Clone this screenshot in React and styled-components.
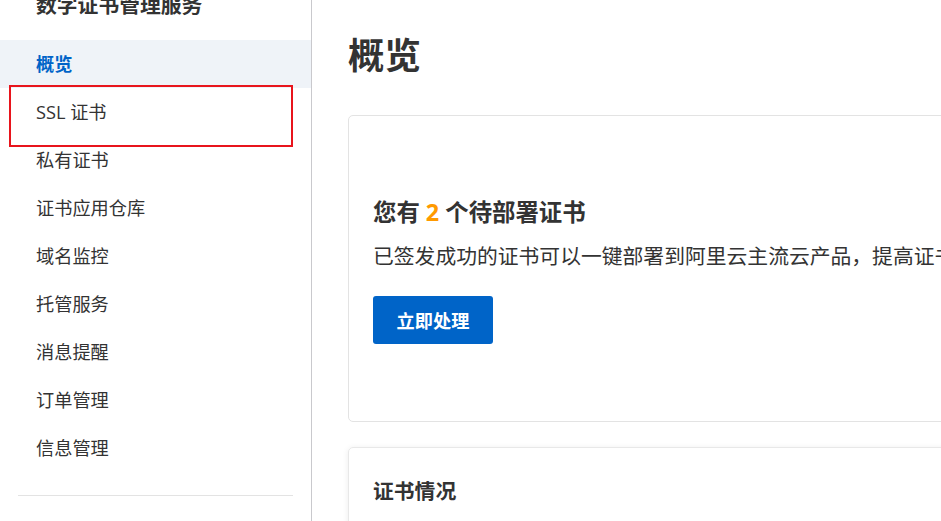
import React from "react";
import styled, { createGlobalStyle } from "styled-components";

const GlobalStyle = createGlobalStyle`
  html, body {
    margin: 0;
    padding: 0;
    background: #fff;
  }
  body {
    font-family: "Open Sans", "Noto Sans CJK SC", sans-serif;
    color: #333;
  }
`;

const menuItems = [
  "概览",
  "SSL 证书",
  "私有证书",
  "证书应用仓库",
  "域名监控",
  "托管服务",
  "消息提醒",
  "订单管理",
  "信息管理",
];

const App = () => {
  return (
    <Page>
      <GlobalStyle />
      <Sidebar>
        <SideTitle>数字证书管理服务</SideTitle>
        <Menu>
          {menuItems.map((item, i) => (
            <MenuItem key={item} active={i === 0}>
              {item}
              {i === 1 && <Highlight />}
            </MenuItem>
          ))}
        </Menu>
        <Divider />
      </Sidebar>
      <Main>
        <PageTitle>概览</PageTitle>
        <Card>
          <CardHeading>
            您有 <Count>2</Count> 个待部署证书
          </CardHeading>
          <CardText>
            已签发成功的证书可以一键部署到阿里云主流云产品，提高证书部署效率。
          </CardText>
          <PrimaryButton>立即处理</PrimaryButton>
        </Card>
        <StatusCard>
          <SectionTitle>证书情况</SectionTitle>
        </StatusCard>
      </Main>
    </Page>
  );
};

export default App;

const Page = styled.div`
  display: flex;
  width: 941px;
  height: 521px;
  overflow: hidden;
`;

const Sidebar = styled.aside`
  flex: none;
  width: 311px;
  border-right: 1px solid #c9c9cd;
  display: flex;
  flex-direction: column;
`;

const SideTitle = styled.div`
  margin-top: -10px;
  height: 30px;
  line-height: 30px;
  margin-bottom: 20px;
  padding-left: 36px;
  font-size: 20.8px;
  font-weight: 700;
  color: #333;
`;

const Menu = styled.nav`
  display: flex;
  flex-direction: column;
`;

const MenuItem = styled.div`
  position: relative;
  height: 48px;
  line-height: 48px;
  padding-left: 36px;
  font-size: 18.2px;
  font-weight: ${(p) => (p.active ? 700 : 400)};
  color: ${(p) => (p.active ? "#0064c8" : "#333")};
  background: ${(p) => (p.active ? "#eff3f8" : "transparent")};
`;

const Highlight = styled.span`
  position: absolute;
  left: 9px;
  top: -3px;
  width: 284px;
  height: 62px;
  box-sizing: border-box;
  border: 2px solid #e8141c;
`;

const Divider = styled.div`
  margin: 23px 0 0 18px;
  width: 275px;
  height: 1px;
  background: #e3e3e3;
`;

const Main = styled.main`
  flex: none;
  width: 1000px;
  padding: 30px 0 0 36px;
  display: flex;
  flex-direction: column;
`;

const PageTitle = styled.h1`
  margin: 0 0 35px;
  height: 50px;
  line-height: 50px;
  font-size: 36.4px;
  font-weight: 700;
  color: #333;
`;

const Card = styled.section`
  border: 1px solid #e3e3e3;
  border-radius: 5px;
  padding: 80px 24px 77px;
  display: flex;
  flex-direction: column;
  align-items: flex-start;
  white-space: nowrap;
`;

const CardHeading = styled.div`
  font-size: 23.4px;
  font-weight: 700;
  line-height: 32px;
  color: #333;
`;

const Count = styled.span`
  color: #ff9a00;
`;

const CardText = styled.div`
  margin-top: 12px;
  font-size: 20.8px;
  line-height: 32px;
  color: #333;
`;

const PrimaryButton = styled.button`
  margin-top: 24px;
  width: 120px;
  height: 48px;
  border: none;
  border-radius: 3px;
  background: #0064c8;
  color: #fff;
  font-family: inherit;
  font-size: 18.2px;
  font-weight: 700;
  cursor: pointer;
`;

const StatusCard = styled.section`
  margin-top: 25px;
  border: 1px solid #e8e8e8;
  border-radius: 5px;
  box-shadow: 0 1px 6px rgba(0, 0, 0, 0.08);
  padding: 28px 24px;
  height: 200px;
`;

const SectionTitle = styled.div`
  font-size: 20.8px;
  font-weight: 700;
  line-height: 30px;
  color: #333;
`;
